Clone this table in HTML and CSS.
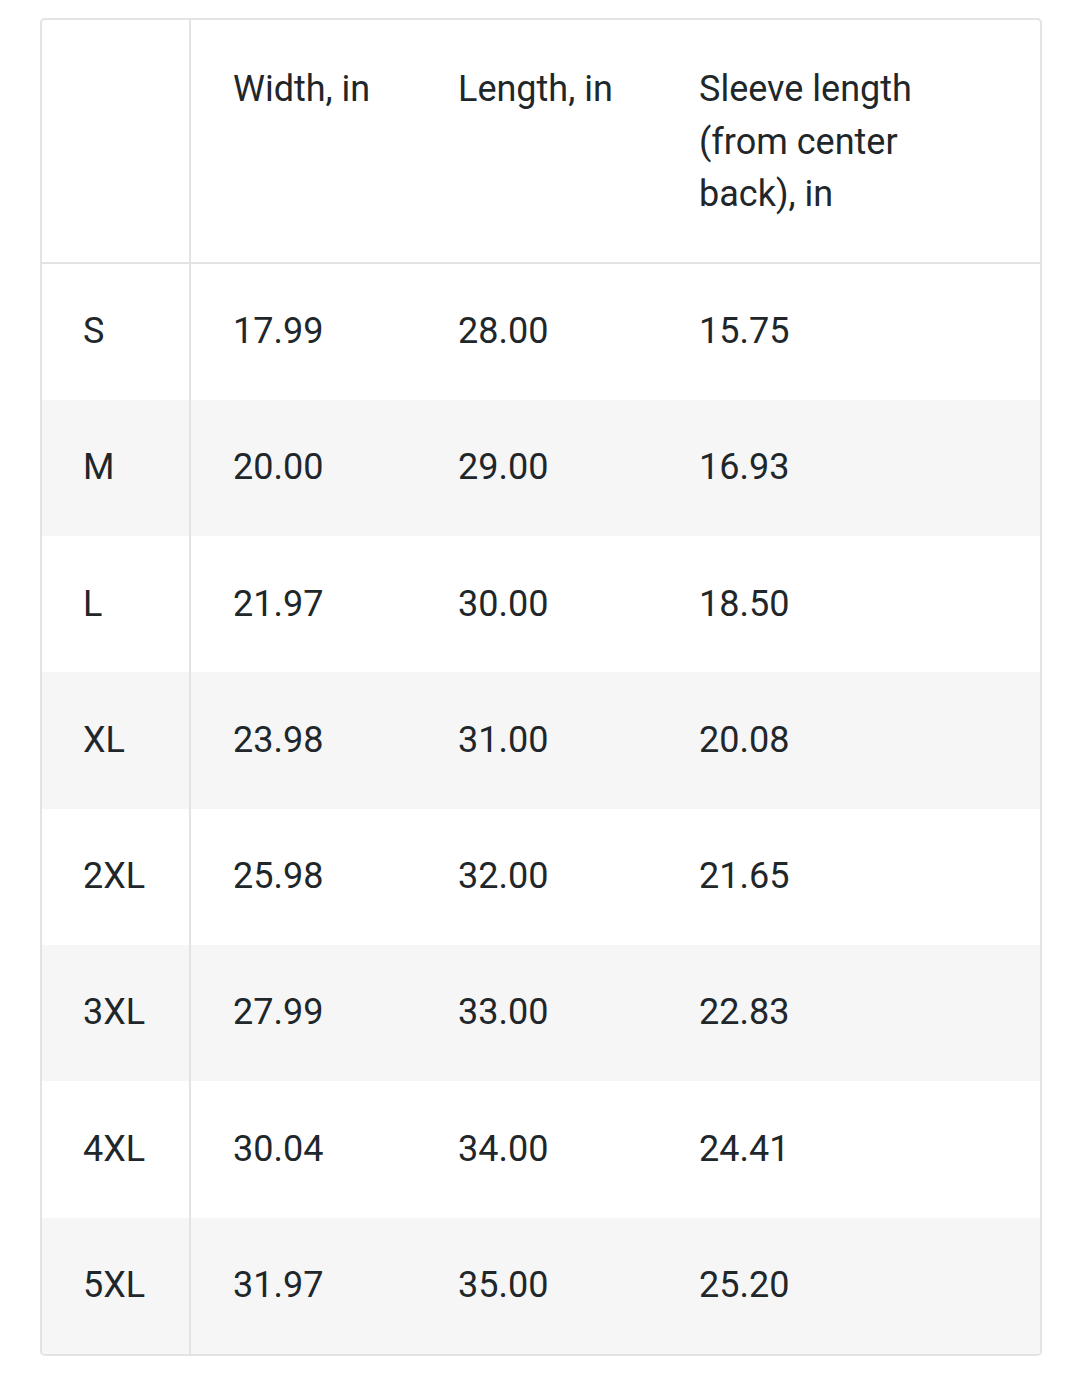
FILE: index.html
```html
<!DOCTYPE html>
<html>
<head>
<meta charset="utf-8">
<link rel="stylesheet" href="styles.css">
</head>
<body>
<div class="page">
  <div class="card">
    <table class="sizes">
      <colgroup>
        <col class="c1"><col class="c2"><col class="c3"><col class="c4">
      </colgroup>
      <thead>
        <tr><th class="first"></th><th class="w">Width, in</th><th>Length, in</th><th>Sleeve length (from center back), in</th></tr>
      </thead>
      <tbody>
        <tr><td class="first">S</td><td class="w">17.99</td><td>28.00</td><td>15.75</td></tr>
        <tr><td class="first">M</td><td class="w">20.00</td><td>29.00</td><td>16.93</td></tr>
        <tr><td class="first">L</td><td class="w">21.97</td><td>30.00</td><td>18.50</td></tr>
        <tr><td class="first">XL</td><td class="w">23.98</td><td>31.00</td><td>20.08</td></tr>
        <tr><td class="first">2XL</td><td class="w">25.98</td><td>32.00</td><td>21.65</td></tr>
        <tr><td class="first">3XL</td><td class="w">27.99</td><td>33.00</td><td>22.83</td></tr>
        <tr><td class="first">4XL</td><td class="w">30.04</td><td>34.00</td><td>24.41</td></tr>
        <tr><td class="first">5XL</td><td class="w">31.97</td><td>35.00</td><td>25.20</td></tr>
      </tbody>
    </table>
  </div>
</div>
</body>
</html>
```
FILE: styles.css
```css
html, body {
  margin: 0;
  padding: 0;
  background: #ffffff;
}
.page {
  padding: 18px 38px 0 40px;
  font-family: Roboto, "Noto Sans", sans-serif;
  color: #1f272b;
}
.card {
  width: 1002px;
  box-sizing: border-box;
  border: 2px solid #e1e3e5;
  border-radius: 5px;
  overflow: hidden;
  box-shadow: 0 6px 10px -6px rgba(0,0,0,0.06);
}
.sizes {
  width: 100%;
  border-collapse: collapse;
  table-layout: fixed;
}
.c1 { width: 148px; }
.c2 { width: 224px; }
.c3 { width: 241px; }
.c4 { width: auto; }
.sizes th, .sizes td {
  font-size: 36px;
  line-height: 53.3px;
  font-weight: 400;
  text-align: left;
  vertical-align: top;
  padding: 41.5px 40px 41.5px 44px;
}
.sizes th {
  line-height: 52.5px;
  padding-top: 43px;
  padding-bottom: 41px;
  border-bottom: 2px solid #e1e3e5;
}
.sizes .w {
  padding-left: 42px;
}
.sizes .first {
  border-right: 2px solid #e1e3e5;
  padding-left: 41px;
  padding-right: 10px;
}
.sizes tbody tr:nth-child(even) {
  background: #f6f6f7;
}
```
